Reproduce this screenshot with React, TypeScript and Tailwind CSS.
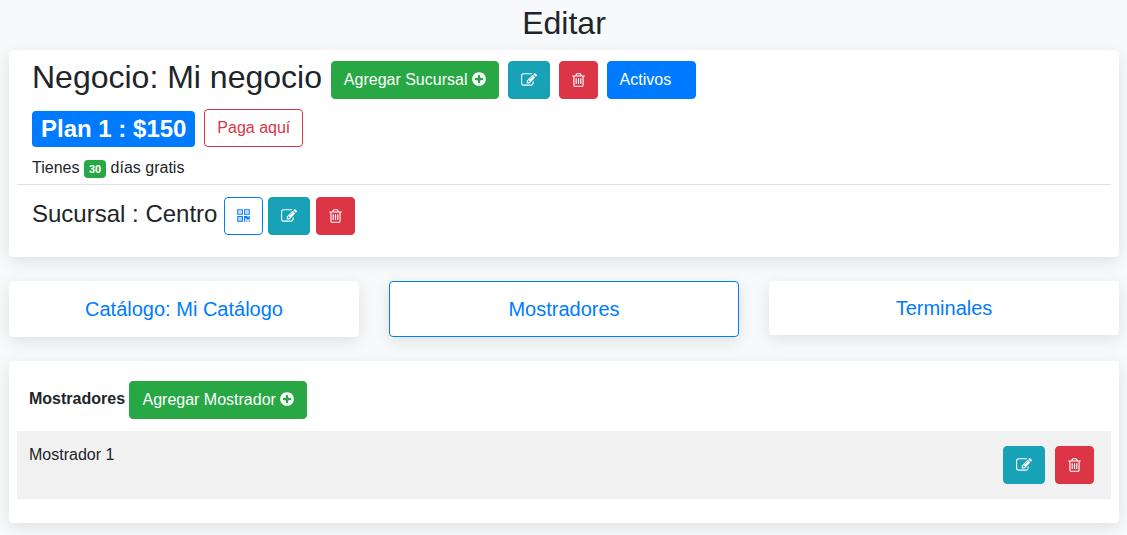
import type { ButtonHTMLAttributes, FC, ReactNode } from 'react';

const VARIANTS = {
  success: 'bg-[#28a745] border-[#28a745] text-white',
  info: 'bg-[#17a2b8] border-[#17a2b8] text-white',
  danger: 'bg-[#dc3545] border-[#dc3545] text-white',
  primary: 'bg-[#007bff] border-[#007bff] text-white',
  outlinePrimary: 'bg-white border-[#007bff] text-[#007bff]',
  outlineDanger: 'bg-white border-[#dc3545] text-[#dc3545]',
} satisfies Record<string, string>;

type ButtonProps = ButtonHTMLAttributes<HTMLButtonElement> & {
  variant: keyof typeof VARIANTS;
  pad?: string;
};

const Button: FC<ButtonProps> = ({ variant, pad = 'px-3', children, ...rest }) => (
  <button
    type="button"
    className={`inline-block h-[38px] cursor-pointer rounded border text-center align-middle text-base font-normal whitespace-nowrap ${pad} ${VARIANTS[variant]}`}
    {...rest}
  >
    {children}
  </button>
);

const PlusIcon: FC = () => (
  <svg
    viewBox="128 0 1536 1792"
    className="inline-block h-4 w-[14px] align-[-2px]"
    fill="currentColor"
    aria-hidden="true"
  >
    <path d="M1344 960v-128q0-26-19-45t-45-19h-256v-256q0-26-19-45t-45-19h-128q-26 0-45 19t-19 45v256h-256q-26 0-45 19t-19 45v128q0 26 19 45t45 19h256v256q0 26 19 45t45 19h128q26 0 45-19t19-45v-256h256q26 0 45-19t19-45zm320-64q0 209-103 385.5t-279.5 279.5-385.5 103-385.5-103-279.5-279.5-103-385.5 103-385.5 279.5-279.5 385.5-103 385.5 103 279.5 279.5 103 385.5z" />
  </svg>
);

const EditIcon: FC = () => (
  <svg
    viewBox="0 0 1792 1792"
    className="inline-block h-4 w-4 align-[-3px]"
    fill="currentColor"
    aria-hidden="true"
  >
    <path d="M888 1184l116-116-152-152-116 116v56h96v96h56zm440-720q-16-16-33 1l-350 350q-17 17-1 33t33-1l350-350q17-17 1-33zm80 594v190q0 119-84.5 203.5t-203.5 84.5h-832q-119 0-203.5-84.5t-84.5-203.5v-832q0-119 84.5-203.5t203.5-84.5h832q63 0 117 25 15 7 18 23 3 17-9 29l-49 49q-14 14-32 8-23-6-45-6h-832q-66 0-113 47t-47 113v832q0 66 47 113t113 47h832q66 0 113-47t47-113v-126q0-13 9-22l64-64q15-15 35-7t20 29zm-96-738l288 288-672 672h-288v-288zm444 132l-92 92-288-288 92-92q28-28 68-28t68 28l152 152q28 28 28 68t-28 68z" />
  </svg>
);

const TrashIcon: FC = () => (
  <svg
    viewBox="192 0 1408 1792"
    className="inline-block h-4 w-[13px] align-[-3px]"
    fill="currentColor"
    aria-hidden="true"
  >
    <path d="M704 736v576q0 14-9 23t-23 9h-64q-14 0-23-9t-9-23v-576q0-14 9-23t23-9h64q14 0 23 9t9 23zm256 0v576q0 14-9 23t-23 9h-64q-14 0-23-9t-9-23v-576q0-14 9-23t23-9h64q14 0 23 9t9 23zm256 0v576q0 14-9 23t-23 9h-64q-14 0-23-9t-9-23v-576q0-14 9-23t23-9h64q14 0 23 9t9 23zm128 724v-948h-896v948q0 22 7 40.5t14.5 27 10.5 8.5h832q3 0 10.5-8.5t14.5-27 7-40.5zm-672-1076h448l-48-117q-7-9-17-11h-317q-10 2-17 11zm928 32v64q0 14-9 23t-23 9h-96v948q0 83-47 143.5t-113 60.5h-832q-66 0-113-58.5t-47-141.5v-952h-96q-14 0-23-9t-9-23v-64q0-14 9-23t23-9h309l70-167q15-37 54-63t79-26h320q40 0 79 26t54 63l70 167h309q14 0 23 9t9 23z" />
  </svg>
);

const QrIcon: FC = () => (
  <svg
    viewBox="192 0 1408 1792"
    className="inline-block h-4 w-[13px] align-[-3px]"
    fill="currentColor"
    aria-hidden="true"
  >
    <path d="M576 1152v128h-128v-128h128zm0-768v128h-128v-128h128zm768 0v128h-128v-128h128zm-1024 1023h384v-383h-384v383zm0-767h384v-384h-384v384zm768 0h384v-384h-384v384zm-256 256v640h-640v-640h640zm512 512v128h-128v-128h128zm256 0v128h-128v-128h128zm0-512v384h-384v-128h-128v384h-128v-640h384v128h128v-128h128zm-768-768v640h-640v-640h640zm768 0v640h-640v-640h640z" />
  </svg>
);

const EditButton: FC<{ label: string }> = ({ label }) => (
  <Button variant="info" aria-label={label}>
    <EditIcon />
  </Button>
);

const DeleteButton: FC<{ label: string }> = ({ label }) => (
  <Button variant="danger" aria-label={label}>
    <TrashIcon />
  </Button>
);

const Card: FC<{ children: ReactNode }> = ({ children }) => (
  <section className="rounded bg-white p-2 shadow-[0_4px_16px_rgba(0,0,0,0.1)]">{children}</section>
);

const TABS = [
  { label: 'Catálogo: Mi Catálogo', cls: 'border border-white' },
  { label: 'Mostradores', cls: 'border border-[#007bff]' },
  { label: 'Terminales', cls: '' },
];

const COUNTERS = ['Mostrador 1'];

const App: FC = () => (
  <main className="min-h-screen bg-[#f8f9fa] px-[9px] pt-1 pr-2 pb-3 font-['Liberation_Sans',Arial,sans-serif] text-base text-[#212529]">
    <h1 className="mb-2 text-center text-[32px] leading-[38px]">Editar</h1>

    <Card>
      <div className="px-[15px]">
        <h2 className="mb-2 text-[32px] leading-[38px]">
          Negocio: Mi negocio{' '}
          <Button variant="success">
            Agregar Sucursal <PlusIcon />
          </Button>{' '}
          <EditButton label="Editar negocio" /> <DeleteButton label="Eliminar negocio" />{' '}
          <Button variant="primary" pad="pl-3 pr-6">
            Activos
          </Button>
        </h2>
        <h2 className="mb-[9px] text-[32px] leading-[38px]">
          <span className="inline-block rounded bg-[#007bff] px-[9px] py-[6px] align-baseline text-2xl leading-6 font-bold text-white">
            Plan 1 : $150
          </span>{' '}
          <Button variant="outlineDanger">Paga aquí</Button>
        </h2>
        <p>
          Tienes{' '}
          <span className="inline-block rounded bg-[#28a745] px-[5px] py-[3px] text-[11px] leading-3 font-bold text-white">
            30
          </span>{' '}
          días gratis
        </p>
      </div>
      <hr className="mt-1 mb-3 border-[#dee2e6]" />
      <div className="px-[15px] pb-[14px]">
        <h3 className="text-2xl leading-7">
          Sucursal : Centro{' '}
          <span className="inline-block align-middle text-base">
            <Button variant="outlinePrimary" aria-label="Código QR">
              <QrIcon />
            </Button>{' '}
            <EditButton label="Editar sucursal" />
          </span>{' '}
          <DeleteButton label="Eliminar sucursal" />
        </h3>
      </div>
    </Card>

    <nav className="my-6 grid grid-cols-3 items-start gap-[30px]">
      {TABS.map((tab) => (
        <a
          key={tab.label}
          href="#"
          className={`rounded bg-white py-[15px] text-center text-xl leading-6 text-[#007bff] shadow-[0_4px_16px_rgba(0,0,0,0.1)] ${tab.cls}`}
        >
          {tab.label}
        </a>
      ))}
    </nav>

    <Card>
      <table className="mb-4 w-full">
        <thead>
          <tr>
            <th colSpan={2} className="p-3 text-left font-bold">
              Mostradores{' '}
              <Button variant="success">
                Agregar Mostrador <PlusIcon />
              </Button>
            </th>
          </tr>
        </thead>
        <tbody>
          {COUNTERS.map((name) => (
            <tr key={name} className="bg-[#f1f1f1]">
              <td className="p-3 align-top">{name}</td>
              <td className="px-[17px] py-[15px]">
                <div className="flex justify-end gap-[10px]">
                  <EditButton label={`Editar ${name}`} />
                  <DeleteButton label={`Eliminar ${name}`} />
                </div>
              </td>
            </tr>
          ))}
        </tbody>
      </table>
    </Card>
  </main>
);

export default App;
